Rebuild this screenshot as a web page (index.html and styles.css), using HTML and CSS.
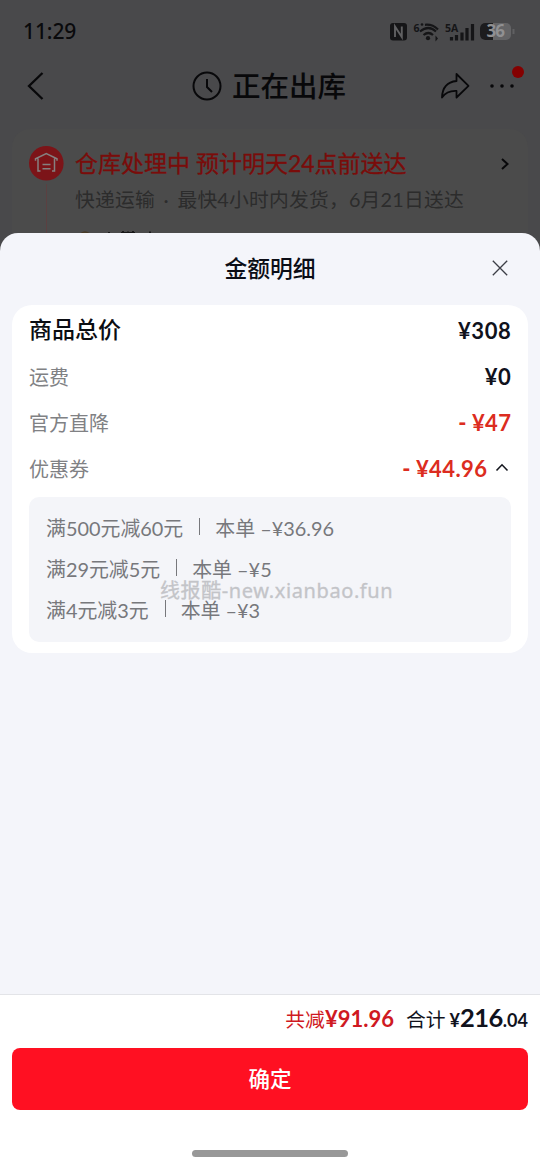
FILE: index.html
```html
<!DOCTYPE html>
<html lang="zh-CN">
<head>
<meta charset="utf-8">
<title>金额明细</title>
<link rel="stylesheet" href="styles.css">
</head>
<body>
<div class="screen">
  <div class="backdrop">
    <div class="status">
      <span class="clock">11:29</span>
      <svg class="status-icons" width="126" height="22" viewBox="0 0 126 22">
        <rect x="1" y="2" width="17" height="17.500" rx="3" fill="#151517"/>
        <path d="M6 16V5.500L12.800 16V5.500" fill="none" stroke="#606062" stroke-width="1.900"/>
        <text x="24.500" y="10.500" class="tiny">6</text>
        <circle cx="33" cy="3.500" r="1.300" fill="#151517"/>
        <path d="M36 3.800Q43.500 3 49 8.500M31 10.500Q39.500 3.500 47 10.500M34.500 14Q39.500 10 44 14" fill="none" stroke="#151517" stroke-width="2.200"/>
        <circle cx="39" cy="17.200" r="2.100" fill="#151517"/>
        <path d="M46.500 14.500l2.500 3-2.500 3z" fill="#151517"/>
        <text x="56" y="10.500" class="tiny">5A</text>
        <path d="M62.500 16v3.500M67.500 14v5.500M73 11.500v8M78 7v12.500M83.500 3v16.500" stroke="#151517" stroke-width="3.200"/>
        <rect x="91" y="2" width="31" height="17" rx="5" fill="#646466"/>
        <path d="M96 2h8v17h-8a5 5 0 0 1-5-5V7a5 5 0 0 1 5-5z" fill="#1c1c1e"/>
        <path d="M124.500 8v5" stroke="#606062" stroke-width="2"/>
        <text x="97.500" y="16.200" class="battery">36</text>
      </svg>
    </div>
    <div class="nav">
      <svg class="back" width="20" height="30" viewBox="0 0 20 30"><path d="M16.500 2L3 15 16.500 28" fill="none" stroke="#08080a" stroke-width="2.300"/></svg>
      <div class="nav-title">
        <svg width="30" height="30" viewBox="0 0 30 30" fill="none" stroke="#08080a" stroke-width="2"><circle cx="15" cy="15" r="13.500"/><path d="M15 8v8l5 5"/></svg>
        <span>正在出库</span>
      </div>
      <div class="nav-actions">
        <svg width="30" height="28" viewBox="0 0 30 28"><path d="M16.500 2L28.500 13.800 16.500 25.500V19Q7 18.500 2 25.500 2.500 10.500 16.500 9z" fill="none" stroke="#08080a" stroke-width="1.800" stroke-linejoin="round"/></svg>
        <svg width="38" height="28" viewBox="0 0 38 28"><g fill="#08080a"><circle cx="5" cy="14" r="1.800"/><circle cx="15" cy="14" r="1.800"/><circle cx="25" cy="14" r="1.800"/></g></svg>
        <i class="dot"></i>
      </div>
    </div>
    <div class="delivery">
      <div class="track">
        <svg width="35" height="35" viewBox="0 0 35 35"><circle cx="17.300" cy="17.300" r="17.300" fill="#7c1418"/><path d="M6.500 14.800V12.800L17.300 7.500 28 12.800V14.800M9 12.500V25H11.500M25.500 12.500V25H23M13.500 18.500h8M13.500 22.800h8" fill="none" stroke="#858080" stroke-width="1.500"/></svg>
        <i class="line"></i>
      </div>
      <div class="delivery-text">
        <div class="headline">仓库处理中 预计明天24点前送达</div>
        <div class="subline">快递运输 · 最快4小时内发货，6月21日送达</div>
        <svg class="address" width="90" height="4" viewBox="0 0 90 4"><path d="M6 3.500Q10 .5 14 3.500" fill="none" stroke="#483a26" stroke-width="1.500"/><path d="M34 2v2M48 1v3M53 1.500v2.500M58 1v3M46 3h14M75 1.500v2.500" stroke="#161616" stroke-width="1.800"/></svg>
      </div>
      <svg class="more" width="10" height="14" viewBox="0 0 10 14"><path d="M2 2l5.500 5L2 12" fill="none" stroke="#08080a" stroke-width="2"/></svg>
    </div>
  </div>

  <div class="sheet">
    <div class="sheet-head">
      <h1>金额明细</h1>
      <svg class="close" width="16" height="16" viewBox="0 0 16 16"><path d="M.8.800l14.400 14.400M15.200.800L.8 15.200" stroke="#3c3e46" stroke-width="1.300"/></svg>
    </div>
    <div class="card">
      <div class="row"><span class="label strong">商品总价</span><span class="price">¥308</span></div>
      <div class="row"><span class="label">运费</span><span class="price">¥0</span></div>
      <div class="row"><span class="label">官方直降</span><span class="price off"><b class="minus">-</b>¥47</span></div>
      <div class="row"><span class="label">优惠券</span><span class="price off"><b class="minus">-</b>¥44.96</span>
        <svg class="fold" width="14" height="10" viewBox="0 0 14 10"><path d="M1.500 7.500L7 1.800 12.500 7.500" fill="none" stroke="#14161e" stroke-width="1.600"/></svg>
      </div>
      <div class="coupons">
        <div class="coupon"><span>满500元减60元</span><i></i><span>本单 <em>–</em>¥36.96</span></div>
        <div class="coupon"><span>满29元减5元</span><i></i><span>本单 <em>–</em>¥5</span></div>
        <div class="coupon"><span>满4元减3元</span><i></i><span>本单 <em>–</em>¥3</span></div>
        <div class="watermark">线报酷-new.xianbao.fun</div>
      </div>
    </div>
    <div class="footer">
      <div class="totals">
        <span class="saved">共减<b>¥91.96</b></span>
        <span class="sum">合计<b class="yen">¥</b><b class="int">216</b><b class="dec">.04</b></span>
      </div>
      <div class="confirm">确定</div>
      <div class="home"></div>
    </div>
  </div>
</div>
</body>
</html>
```

FILE: styles.css
```css
* { box-sizing: border-box; }
body {
  margin: 0;
  background: #49494b;
  font-family: Lato, "Noto Sans CJK SC", sans-serif;
}
i, em { font-style: normal; }
svg { display: block; flex: none; }
.screen {
  display: flex;
  flex-direction: column;
  width: 540px;
  height: 1165px;
  overflow: hidden;
}

/* Dimmed order page */
.backdrop { height: 233px; overflow: hidden; flex: none; }
.status {
  display: flex;
  justify-content: space-between;
  align-items: center;
  height: 63px;
  padding: 0 25px 0 23px;
}
.clock { padding-bottom: 2px; font: 500 21px/24px "Noto Sans", sans-serif; letter-spacing: -.1px; color: #0a0a0c; }
.tiny { font: 700 10.500px "Open Sans", sans-serif; fill: #151517; }
.battery { font: 700 17px "Open Sans", sans-serif; letter-spacing: -.9px; fill: #909092; }
.nav {
  display: grid;
  grid-template-columns: 1fr auto 1fr;
  align-items: center;
  height: 46px;
  padding: 0 15px 0 26px;
  color: #08080a;
}
.nav-title {
  display: flex;
  align-items: center;
  gap: 10px;
  margin-right: 13px;
  font-size: 28.500px;
  font-weight: 500;
  line-height: 44px;
}
.nav-actions { position: relative; display: flex; justify-content: flex-end; gap: 17px; }
.dot {
  position: absolute;
  right: 1px;
  top: -6px;
  width: 12px;
  height: 12px;
  border-radius: 50%;
  background: #840000;
}
.delivery {
  display: flex;
  height: 160px;
  margin: 20px 12px 0;
  padding: 17px 18px 0 17px;
  border-radius: 18px;
  background: #4b4b4b;
}
.track { display: flex; flex-direction: column; align-items: center; gap: 3px; }
.line { width: 1px; height: 80px; background: #5b4041; }
.delivery-text { flex: 1; padding-left: 11px; white-space: nowrap; }
.headline { font-size: 23px; line-height: 34px; color: #7a0c0a; -webkit-text-stroke: .3px #7a0c0a; }
.subline { padding-top: 2px; font-size: 19.800px; letter-spacing: .2px; word-spacing: 3.300px; line-height: 34px; color: #2c2c2c; }
.address { margin-top: 14px; }
.more { margin-top: 11px; }

/* Amount sheet */
.sheet {
  display: flex;
  flex: 1;
  flex-direction: column;
  border-radius: 18px 18px 0 0;
  background: #f4f5fa;
  overflow: hidden;
}
.sheet-head {
  display: grid;
  grid-template-columns: 1fr auto 1fr;
  align-items: center;
  height: 72px;
  padding: 0 32px 2px;
}
h1 {
  grid-column: 2;
  margin: 0;
  font-size: 22.800px;
  line-height: 32px;
  font-weight: 500;
  color: #0b0d16;
}
.close { justify-self: end; }
.card {
  margin: 0 12px;
  padding: 3px 17px 11px;
  border-radius: 20px;
  background: #fff;
}
.row { display: flex; align-items: center; height: 46px; }
.label { flex: 1; font-size: 20px; line-height: 30px; color: #808184; padding-bottom: 1px; }
.strong { font-size: 23px; font-weight: 500; color: #0b0d12; padding-bottom: 4px; }
.price { font-size: 22px; font-weight: 700; letter-spacing: .6px; margin-right: -.4px; line-height: 30px; color: #10121c; }
.off { color: #dc2c20; letter-spacing: .4px; }
.minus { margin-right: 5px; }
.fold { margin: 0 2px 2px 8px; }
.coupons {
  position: relative;
  margin-top: 5px;
  padding: 10px 17px 12px;
  border-radius: 10px;
  background: #f4f5f9;
}
.coupon {
  display: flex;
  align-items: center;
  height: 41px;
  font-size: 19.900px;
  color: #77787c;
  white-space: nowrap;
}
.coupon i { width: 1px; height: 17px; margin: 0 15px 3px 16px; background: #77787c; }
.watermark {
  position: absolute;
  left: 131px;
  top: 80px;
  font: 400 20px/28px "Noto Sans", "Noto Sans CJK SC", sans-serif;
  letter-spacing: .6px;
  color: #c3c4c8;
  -webkit-text-stroke: .3px #c3c4c8;
  white-space: nowrap;
}

/* Totals and confirm action */
.footer {
  height: 171px;
  margin-top: auto;
  padding: 0 12px;
  border-top: 1px solid #e3e4e8;
  background: #fff;
}
.totals {
  display: flex;
  justify-content: flex-end;
  align-items: baseline;
  gap: 12px;
  height: 53px;
  line-height: 44px;
  font-size: 19.800px;
}
.saved { color: #cf1922; }
.saved b { font-size: 22px; }
.sum { color: #10121c; }
.yen { margin-left: 4px; font-size: 18px; }
.int { font-size: 25.500px; letter-spacing: -.5px; }
.dec { font-size: 18px; }
.confirm {
  height: 62px;
  border-radius: 8px;
  background: #ff1022;
  font-size: 21.500px;
  font-weight: 500;
  line-height: 62px;
  text-align: center;
  color: #fff;
}
.home { width: 156px; height: 7px; margin: 40px auto 0; border-radius: 4px; background: #989898; }
```
